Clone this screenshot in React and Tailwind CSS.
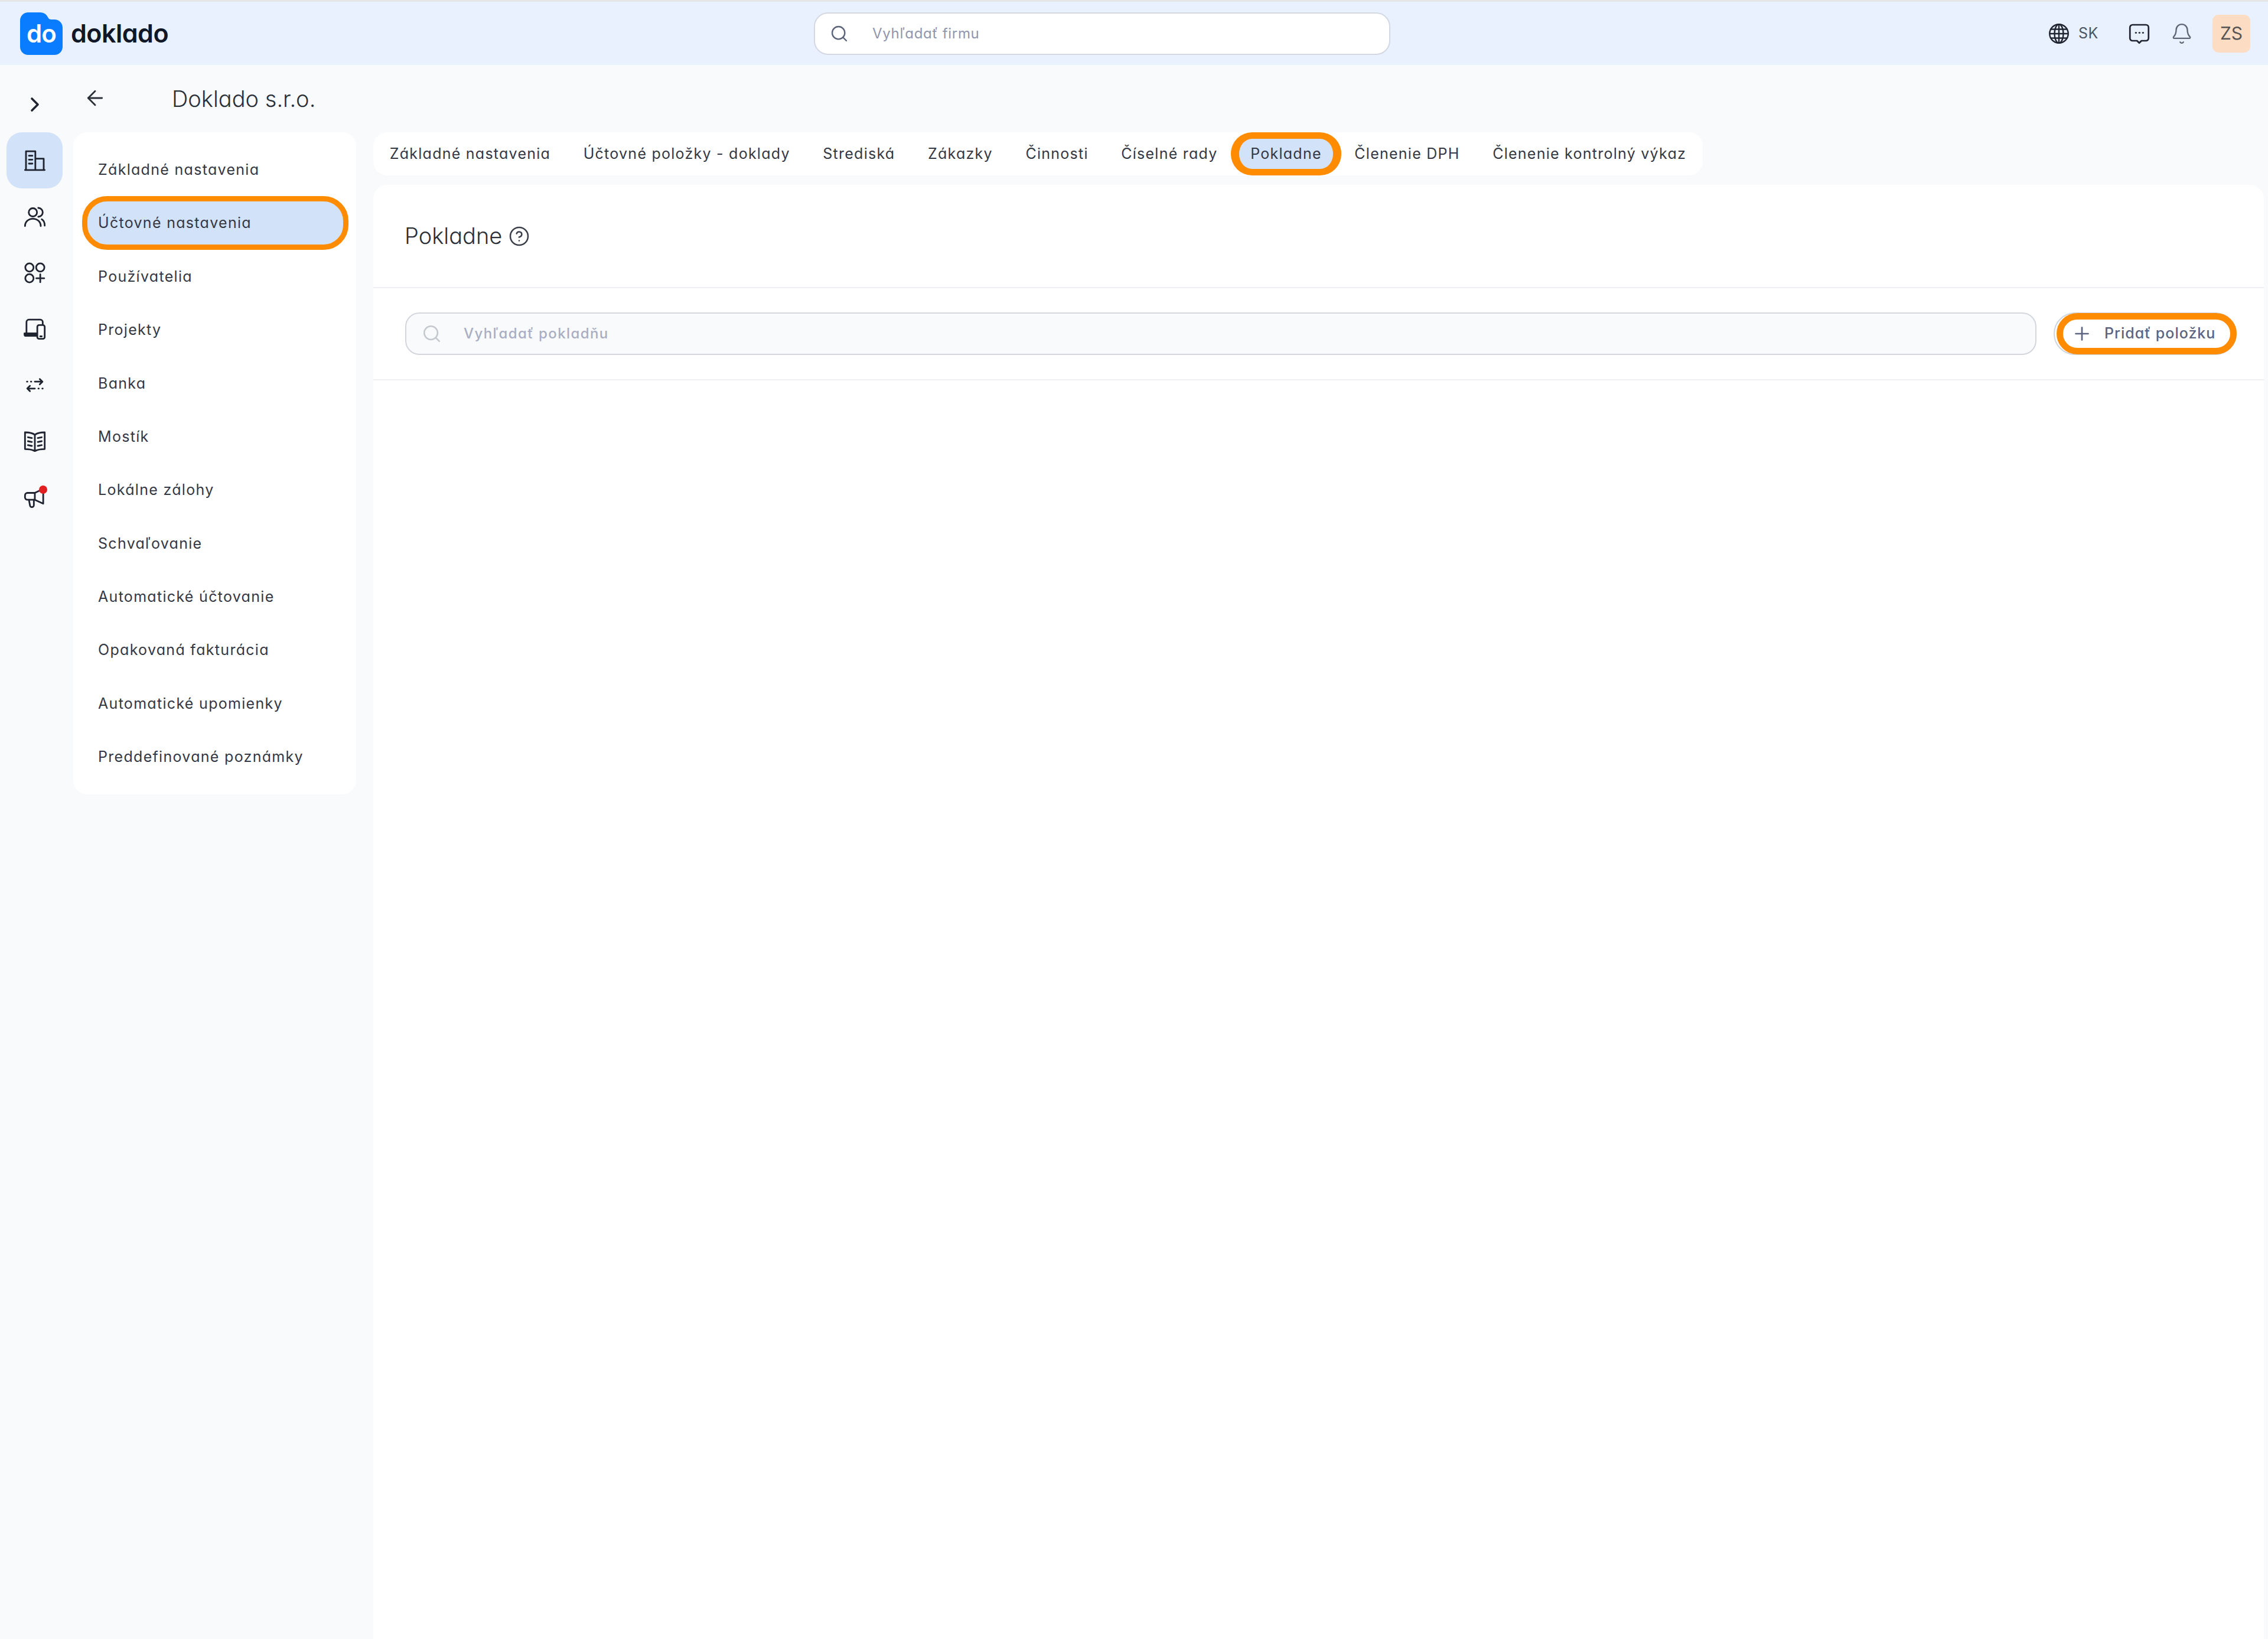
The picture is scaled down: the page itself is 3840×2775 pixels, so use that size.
import { ArrowLeft, ChevronRight, Search, Plus, Bell, CircleHelp } from "lucide-react";

const font = "font-['Inter','Liberation_Sans',sans-serif] [font-feature-settings:'cv11']";

const menuItems = [
  "Základné nastavenia",
  "Účtovné nastavenia",
  "Používatelia",
  "Projekty",
  "Banka",
  "Mostík",
  "Lokálne zálohy",
  "Schvaľovanie",
  "Automatické účtovanie",
  "Opakovaná fakturácia",
  "Automatické upomienky",
  "Preddefinované poznámky",
];

const tabs = [
  "Základné nastavenia",
  "Účtovné položky - doklady",
  "Strediská",
  "Zákazky",
  "Činnosti",
  "Číselné rady",
  "Pokladne",
  "Členenie DPH",
  "Členenie kontrolný výkaz",
];

function RailIcon({ children }) {
  return (
    <svg viewBox="0 0 24 24" fill="none" stroke="#1f2430" strokeWidth="1.7" strokeLinecap="round" strokeLinejoin="round" className="w-[40px] h-[40px]">
      {children}
    </svg>
  );
}

const railIcons = [
  <RailIcon key="company">
    <path d="M3 21.5V2.500h9.500v19M12.500 10h8.500v11.500M2 21.5h20" />
    <path d="M6 7h3.500M6 11h3.500M6 15h3.500" />
  </RailIcon>,
  <RailIcon key="users">
    <circle cx="10" cy="7.5" r="4.200" />
    <path d="M15.500 3a4.500 4.500 0 0 1 0 9M2 21.500c0-4.500 3.500-7.500 8-7.500s8 3 8 7.500M19 14.600c1.900 1 3 3.400 3 6.400" />
  </RailIcon>,
  <RailIcon key="apps">
    <circle cx="6.500" cy="6.500" r="4.200" />
    <circle cx="17.500" cy="6.500" r="4.200" />
    <circle cx="6.500" cy="17.500" r="4.200" />
    <path d="M17.500 13.500v8M13.500 17.500h8" />
  </RailIcon>,
  <RailIcon key="devices">
    <path d="M3.500 16V5a2.500 2.500 0 0 1 2.500-2.500h11.500A2.500 2.500 0 0 1 20 5v2" />
    <path d="M1.500 16.500h12.500v2.500H3a1.500 1.500 0 0 1-1.500-1.500z" fill="#1f2430" />
    <rect x="14.500" y="8" width="7.500" height="14" rx="1.800" fill="#f8fafc" />
    <path d="M17.500 19.500h1.500" />
  </RailIcon>,
  <RailIcon key="transfer">
    <path d="M4 8.500h.4M8 8.500h.4M12 8.500h7.500M17 5.800l2.700 2.700-2.700 2.700M20 15.500h-.4M16 15.500h-.4M12 15.500H4.500M7 12.800l-2.700 2.700 2.700 2.700" />
  </RailIcon>,
  <RailIcon key="book">
    <path d="M12 5.500C10 3.800 6.500 3 2 3v17c4.500 0 8 .8 10 2 2-1.200 5.500-2 10-2V3c-4.500 0-8 .8-10 2.500zM12 5.500V22" />
    <path d="M5 8l4 .8M5 12l4 .8M5 16l4 .8M19 8l-4 .8M19 12l-4 .8M19 16l-4 .8" />
  </RailIcon>,
  <RailIcon key="megaphone">
    <path d="M2 10a2.500 2.500 0 0 1 2.500-2.500H12L20.500 3.500v15L12 14.500H4.500A2.500 2.500 0 0 1 2 12z" />
    <path d="M12 7.500v7M6 14.500l1 5.500a2 2 0 0 0 4 0v-5.500" />
  </RailIcon>,
];

function Logo() {
  return (
    <div className="flex items-center gap-[14px]">
      <div className="relative w-[72px] h-[72px] flex items-center justify-center">
        <svg viewBox="0 0 72 72" className="absolute inset-0 w-full h-full">
          <path d="M14 0h20c7 0 11 4 13 8 1.500 3 3 4 7 4h4c8 0 14 6 14 14v32c0 8-6 14-14 14H14C6 72 0 66 0 58V14C0 6 6 0 14 0z" fill="#0a7cff" />
        </svg>
        <span className="relative text-white text-[42px] leading-none font-semibold tracking-[-1px] font-['Inter',sans-serif] [font-feature-settings:'cv11']">do</span>
      </div>
      <span className="text-[#101828] text-[43px] leading-none font-semibold tracking-[-0.5px] font-['Inter',sans-serif] [font-feature-settings:'cv11']">doklado</span>
    </div>
  );
}

function Header() {
  return (
    <header className="relative h-[110px] bg-[#e8f1fd] border-t-[3px] border-[#e3e6e4] flex items-center pl-[34px] pr-[30px]">
      <div className="flex-1">
        <Logo />
      </div>
      <div className="absolute left-[1378px] top-[18px] w-[976px] h-[72px] bg-white rounded-[24px] border-2 border-[#d3d8e2] flex items-center pl-[25px]">
        <Search className="w-[32px] h-[32px] text-[#5b6478]" strokeWidth={1.8} />
        <span className="ml-[40px] text-[24px] tracking-[0.7px] text-[#9096ab]">Vyhľadať firmu</span>
      </div>
      <div className="flex items-center text-[#4b5563]">
        <svg viewBox="0 0 24 24" fill="none" stroke="#1f2430" strokeWidth="1.6" className="w-[36px] h-[36px]">
          <circle cx="12" cy="12" r="10.500" />
          <ellipse cx="12" cy="12" rx="5" ry="10.500" />
          <path d="M1.500 12h21M3 7h18M3 17h18M12 1.500v21" />
        </svg>
        <span className="ml-[15px] text-[25px] w-[85px] tracking-[0.5px]">SK</span>
        <svg viewBox="0 0 24 24" fill="none" stroke="#1f2430" strokeWidth="1.800" strokeLinejoin="round" className="w-[36px] h-[36px]">
          <path d="M4.500 2h15A3 3 0 0 1 22.500 5v12a3 3 0 0 1-3 3h-5L12 22.500 9.500 20h-5a3 3 0 0 1-3-3V5a3 3 0 0 1 3-3z" />
          <path d="M8 11h.5M12 11h.5M16 11h.5" strokeLinecap="round" />
        </svg>
        <Bell className="ml-[35px] w-[38px] h-[38px] text-[#5d6675]" strokeWidth={1.5} />
        <div className="ml-[33px] w-[64px] h-[64px] rounded-[10px] bg-[#fddcc4] flex items-center justify-center text-[30px] text-[#555555]">
          ZS
        </div>
      </div>
    </header>
  );
}

function Rail() {
  return (
    <aside className="w-[124px] shrink-0 pl-[11px]">
      <div className="h-[114px] w-[95px] flex items-center justify-center">
        <ChevronRight className="w-[40px] h-[40px] text-[#1f2430] mt-[19px]" strokeWidth={2.200} />
      </div>
      {railIcons.map((icon, i) => (
        <div key={i} className={`relative w-[95px] h-[95px] flex items-center justify-center ${i === 0 ? "bg-[#d2e2f9] rounded-[26px]" : ""}`}>
          {icon}
          {i === 6 && <span className="absolute top-[28px] right-[26px] w-[14px] h-[14px] rounded-full bg-[#e02020]" />}
        </div>
      ))}
    </aside>
  );
}

function Menu() {
  return (
    <nav className="w-[479px] shrink-0 self-start bg-white rounded-[24px] py-[18px]">
      {menuItems.map((item, i) =>
        i === 1 ? (
          <div key={item} className="ml-[15px] mr-[13px] h-[90.400px] flex items-center pl-[18px] pt-[1px] bg-[#d2e2f9] rounded-[42px] border-[9px] border-[#ff8c00] text-[25px] tracking-[1.300px] text-[#333844]">
            {item}
          </div>
        ) : (
          <div key={item} className="ml-[15px] mr-[13px] h-[90.400px] flex items-center pl-[27px] pt-[1px] text-[25px] tracking-[1.300px] text-[#333844]">
            {item}
          </div>
        )
      )}
    </nav>
  );
}

function Tabs() {
  return (
    <div className="flex items-center w-fit h-[73px] bg-white rounded-[24px]">
      {tabs.map((tab) => (
        <div key={tab} className="relative h-full flex items-center px-[27.800px] text-[25px] tracking-[1.250px] text-[#333844]">
          {tab === "Pokladne" && (
            <span className="absolute inset-y-0 -inset-x-[5px] rounded-[36px] bg-[#d2e2f9] border-x-[14px] border-y-[11px] border-[#ff8c00]" />
          )}
          <span className="relative">{tab}</span>
        </div>
      ))}
    </div>
  );
}

function Content() {
  return (
    <section className="flex-1 bg-white rounded-t-[24px] flex flex-col">
      <div className="h-[175px] shrink-0 pl-[53px] pr-[55px] flex items-center gap-[11px] border-b-2 border-[#eef0f3]">
        <span className="text-[38px] font-light text-[#2b2f38]">Pokladne</span>
        <CircleHelp className="w-[36px] h-[36px] text-[#3a3f4a]" strokeWidth={1.700} />
      </div>
      <div className="h-[156px] shrink-0 pl-[54px] pr-[46px] flex items-center gap-[29px] border-b-2 border-[#eef0f3]">
        <div className="flex-1 h-[72px] bg-[#f8fafc] rounded-[24px] border-2 border-[#d3d6dc] flex items-center pl-[26px]">
          <Search className="w-[34px] h-[34px] text-[#c5c8ce]" strokeWidth={1.800} />
          <span className="ml-[37px] text-[24px] font-medium tracking-[1.400px] text-[#a9aec2]">Vyhľadať pokladňu</span>
        </div>
        <div className="relative w-[310px] h-[72px] rounded-[36px] border-2 border-[#cdd5df] flex items-center pl-[28px]">
          <span className="absolute -inset-y-[1px] left-[3px] -right-[2px] rounded-[37px] border-[11px] border-[#ff8c00]" />
          <Plus className="relative w-[36px] h-[36px] text-[#5c6480]" strokeWidth={1.800} />
          <span className="relative ml-[20px] text-[25px] font-medium tracking-[1px] text-[#5c6480]">Pridať položku</span>
        </div>
      </div>
    </section>
  );
}

export default function App() {
  return (
    <div className={`h-[2775px] overflow-hidden bg-[#f8fafc] flex flex-col ${font}`}>
      <Header />
      <div className="flex-1 flex min-h-0">
        <Rail />
        <div className="flex-1 flex flex-col pr-[7px]">
          <div className="h-[114px] shrink-0 flex items-center pl-[17px]">
            <ArrowLeft className="w-[40px] h-[40px] text-[#2b2f38] mb-[2px]" strokeWidth={1.700} />
            <span className="ml-[110px] text-[38px] font-light text-[#2b2f38]">Doklado s.r.o.</span>
          </div>
          <div className="flex-1 flex gap-[29px] min-h-0">
            <Menu />
            <div className="flex-1 flex flex-col gap-[16px]">
              <Tabs />
              <Content />
            </div>
          </div>
        </div>
      </div>
    </div>
  );
}
